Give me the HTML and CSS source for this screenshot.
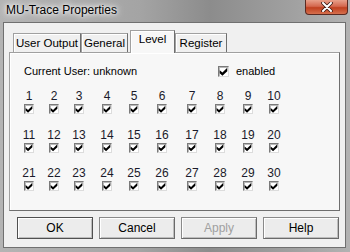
FILE: index.html
```html
<!DOCTYPE html>
<html>
<head>
	<title>MU-Trace Properties</title>
	<link rel="stylesheet" href="styles.css">
</head>
<body>
<div class="window">
	<div class="titlebar">
		<span class="caption">MU-Trace Properties</span>
		<span class="closeBtn">
			<svg width="14" height="10" viewBox="0 0 14 10">
				<path d="M3 1 L11 9 M11 1 L3 9" stroke="#3a1a14" stroke-width="3.6" stroke-linecap="round"/>
				<path d="M3 1 L11 9 M11 1 L3 9" stroke="#fff" stroke-width="2" stroke-linecap="round"/>
			</svg>
		</span>
	</div>
	<div class="client">
		<div class="tabs">
			<div class="tab tabUser">User Output</div>
			<div class="tab tabGeneral">General</div>
			<div class="tab tabLevel active">Level</div>
			<div class="tab tabRegister">Register</div>
		</div>
		<div class="panel">
			<div class="topRow">
				<span class="userLabel">Current User: unknown</span>
				<span class="cb big"></span>
				<span class="enabledText">enabled</span>
			</div>
			<div class="levels">
				<div class="lvl"><span class="num">1</span><span class="cb"></span></div>
				<div class="lvl"><span class="num">2</span><span class="cb"></span></div>
				<div class="lvl"><span class="num">3</span><span class="cb"></span></div>
				<div class="lvl"><span class="num">4</span><span class="cb"></span></div>
				<div class="lvl"><span class="num">5</span><span class="cb"></span></div>
				<div class="lvl"><span class="num">6</span><span class="cb"></span></div>
				<div class="lvl"><span class="num">7</span><span class="cb"></span></div>
				<div class="lvl"><span class="num">8</span><span class="cb"></span></div>
				<div class="lvl"><span class="num">9</span><span class="cb"></span></div>
				<div class="lvl"><span class="num">10</span><span class="cb"></span></div>

				<div class="lvl"><span class="num">11</span><span class="cb"></span></div>
				<div class="lvl"><span class="num">12</span><span class="cb"></span></div>
				<div class="lvl"><span class="num">13</span><span class="cb"></span></div>
				<div class="lvl"><span class="num">14</span><span class="cb"></span></div>
				<div class="lvl"><span class="num">15</span><span class="cb"></span></div>
				<div class="lvl"><span class="num">16</span><span class="cb"></span></div>
				<div class="lvl"><span class="num">17</span><span class="cb"></span></div>
				<div class="lvl"><span class="num">18</span><span class="cb"></span></div>
				<div class="lvl"><span class="num">19</span><span class="cb"></span></div>
				<div class="lvl"><span class="num">20</span><span class="cb"></span></div>

				<div class="lvl"><span class="num">21</span><span class="cb"></span></div>
				<div class="lvl"><span class="num">22</span><span class="cb"></span></div>
				<div class="lvl"><span class="num">23</span><span class="cb"></span></div>
				<div class="lvl"><span class="num">24</span><span class="cb"></span></div>
				<div class="lvl"><span class="num">25</span><span class="cb"></span></div>
				<div class="lvl"><span class="num">26</span><span class="cb"></span></div>
				<div class="lvl"><span class="num">27</span><span class="cb"></span></div>
				<div class="lvl"><span class="num">28</span><span class="cb"></span></div>
				<div class="lvl"><span class="num">29</span><span class="cb"></span></div>
				<div class="lvl"><span class="num">30</span><span class="cb"></span></div>
			</div>
		</div>
		<div class="buttons">
			<div class="btn default">OK</div>
			<div class="btn">Cancel</div>
			<div class="btn disabled">Apply</div>
			<div class="btn">Help</div>
		</div>
	</div>
</div>
</body>
</html>
```

FILE: styles.css
```css
body {
	margin: 0;
	font-family: "Liberation Sans", Arial, sans-serif;
	font-size: 11px;
	color: #000;
	background: #a9a9a9;
}
.window {
	width: 350px;
	height: 252px;
	box-sizing: border-box;
	padding: 0 4px 4px 3px;
	background: linear-gradient(to right, #b4b4b4, #a4a4a4 40%, #8c8c8c 60%, #a2a2a2 85%, #b2b2b2);
	display: flex;
	flex-direction: column;
}
.titlebar {
	height: 22px;
	display: flex;
	align-items: flex-start;
}
.caption {
	margin: 3px 0 0 1px;
	font-size: 12px;
	line-height: 14px;
	padding: 0 2px;
	text-shadow: 0 0 6px #fff, 0 0 10px #fff, 0 0 3px #eee;
}
.closeBtn {
	margin-left: auto;
	margin-right: -2px;
	width: 43px;
	height: 15px;
	box-sizing: border-box;
	border: 1px solid #5a2a22;
	border-top: none;
	border-radius: 0 0 4px 4px;
	background: linear-gradient(#e8a08a, #d4684e 45%, #c0401f 55%, #d6704e);
	display: flex;
	align-items: center;
	justify-content: center;
}
.client {
	flex: 1;
	border: 1px solid #707070;
	background: #f0f0f0;
	padding: 7px 5px 0 5px;
}
.tabs {
	height: 22px;
	display: flex;
	align-items: flex-end;
	padding-left: 4px;
}
.tab {
	height: 19px;
	box-sizing: border-box;
	border: 1px solid #a0a0a0;
	border-right-color: #6e6e6e;
	border-bottom: none;
	box-shadow: inset 1px 1px #fff;
	background: #f0f0f0;
	text-align: center;
	line-height: 17px;
	padding-top: 1px;
	font-size: 11.5px;
}
.tabUser { width: 68px; }
.tabGeneral { width: 47px; }
.tabLevel { width: 45px; margin-left: 2px; }
.tabRegister { width: 52px; }
.tab.active {
	height: 23px;
	margin-bottom: -1px;
	background: #f7f7f7;
	line-height: 15px;
	position: relative;
}
.panel {
	height: 159px;
	box-sizing: border-box;
	border: 1px solid #a0a0a0;
	border-right-color: #6e6e6e;
	border-bottom-color: #6e6e6e;
	box-shadow: inset 1px 1px #fff;
	background: #f7f7f7;
	padding: 12px 0 0 14px;
}
.topRow {
	display: flex;
	align-items: center;
	height: 13px;
	line-height: 13px;
}
.userLabel {
	width: 194px;
}
.enabledText {
	margin-left: 7px;
}
.cb {
	display: block;
	position: relative;
	width: 10px;
	height: 10px;
	box-sizing: border-box;
	border: 1px solid;
	border-color: #7a7a7a #dcdcdc #dcdcdc #7a7a7a;
	box-shadow: inset 1px 1px #b8b8b8;
	background: #fff;
}
.cb.big {
	width: 11px;
	height: 11px;
}
.cb::after {
	content: "";
	position: absolute;
	left: 0;
	top: 0;
	width: 8px;
	height: 8px;
	background: #000;
	clip-path: polygon(8% 36%, 38% 62%, 92% 8%, 92% 46%, 38% 96%, 8% 70%);
}
.cb.big::after {
	width: 9px;
	height: 9px;
}
.levels {
	margin-top: 12px;
	display: grid;
	grid-template-columns: 25px 25px 28px 27px 28px 30px 28px 28px 26px 10px;
	row-gap: 14.5px;
}
.lvl {
	width: 10px;
	display: flex;
	flex-direction: column;
	align-items: center;
}
.num {
	height: 13px;
	line-height: 13px;
	white-space: nowrap;
	font-size: 12px;
	color: #1a1a2a;
}
.lvl .cb {
	margin-top: 1px;
}
.buttons {
	display: flex;
	gap: 6px;
	padding: 6px 0 0 8px;
}
.btn {
	width: 76px;
	height: 22px;
	box-sizing: border-box;
	border: 1px solid #8a8a8a;
	border-right-color: #6a6a6a;
	border-bottom-color: #6a6a6a;
	box-shadow: inset 1px 1px #fff, inset -1px -1px #bdbdbd;
	background: #ececec;
	text-align: center;
	line-height: 20px;
	font-size: 12px;
}
.btn.default {
	border-color: #505050;
}
.btn.disabled {
	color: #a0a0a0;
}
```
